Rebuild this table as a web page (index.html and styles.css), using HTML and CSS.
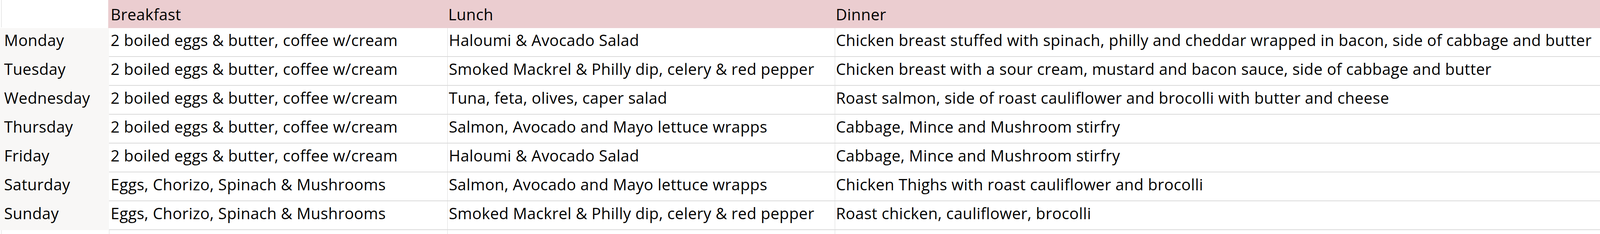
FILE: index.html
```html
<!DOCTYPE html>
<html>
<head>
<meta charset="utf-8">
<link rel="stylesheet" href="styles.css">
</head>
<body>
<div class="sheet">
  <div class="cell corner"></div>
  <div class="cell head first-head">Breakfast</div>
  <div class="cell head">Lunch</div>
  <div class="cell head">Dinner</div>

  <div class="cell day">Monday</div>
  <div class="cell b">2 boiled eggs &amp; butter, coffee w/cream</div>
  <div class="cell l">Haloumi &amp; Avocado Salad</div>
  <div class="cell d">Chicken breast stuffed with spinach, philly and cheddar wrapped in bacon, side of cabbage and butter</div>

  <div class="cell day">Tuesday</div>
  <div class="cell b">2 boiled eggs &amp; butter, coffee w/cream</div>
  <div class="cell l">Smoked Mackrel &amp; Philly dip, celery &amp; red pepper</div>
  <div class="cell d">Chicken breast with a sour cream, mustard and bacon sauce, side of cabbage and butter</div>

  <div class="cell day">Wednesday</div>
  <div class="cell b">2 boiled eggs &amp; butter, coffee w/cream</div>
  <div class="cell l">Tuna, feta, olives, caper salad</div>
  <div class="cell d">Roast salmon, side of roast cauliflower and brocolli with butter and cheese</div>

  <div class="cell day">Thursday</div>
  <div class="cell b">2 boiled eggs &amp; butter, coffee w/cream</div>
  <div class="cell l">Salmon, Avocado and Mayo lettuce wrapps</div>
  <div class="cell d">Cabbage, Mince and Mushroom stirfry</div>

  <div class="cell day">Friday</div>
  <div class="cell b">2 boiled eggs &amp; butter, coffee w/cream</div>
  <div class="cell l">Haloumi &amp; Avocado Salad</div>
  <div class="cell d">Cabbage, Mince and Mushroom stirfry</div>

  <div class="cell day">Saturday</div>
  <div class="cell b">Eggs, Chorizo, Spinach &amp; Mushrooms</div>
  <div class="cell l">Salmon, Avocado and Mayo lettuce wrapps</div>
  <div class="cell d">Chicken Thighs with roast cauliflower and brocolli</div>

  <div class="cell day">Sunday</div>
  <div class="cell b">Eggs, Chorizo, Spinach &amp; Mushrooms</div>
  <div class="cell l">Smoked Mackrel &amp; Philly dip, celery &amp; red pepper</div>
  <div class="cell d">Roast chicken, cauliflower, brocolli</div>

  <div class="cell tail tail-first"></div>
  <div class="cell tail"></div>
  <div class="cell tail"></div>
  <div class="cell tail"></div>
</div>
</body>
</html>
```

FILE: styles.css
```css
html, body {
  margin: 0;
  padding: 0;
  background: #ffffff;
}

.sheet {
  display: grid;
  grid-template-columns: 278.5px 866.7px 992px 1fr;
  grid-template-rows: 72px repeat(7, 74px) 1fr;
  width: 100%;
  height: 100vh;
  overflow: hidden;
  font-family: "Open Sans", "Liberation Sans", sans-serif;
  font-size: 40px;
  line-height: 40px;
  letter-spacing: 0.4px;
  color: #000000;
}

.cell {
  box-sizing: border-box;
  white-space: nowrap;
  padding-left: 4.8px;
  padding-top: 11px;
}

.corner {
  margin-left: 3px;
  border-left: 1.75px solid #d4d4d4;
  margin-bottom: 2px;
}

.head {
  background: #ebcdd0;
  padding-top: 17px;
  padding-left: 2.2px;
}

.first-head {
  margin-left: -1.75px;
  padding-left: 6.5px;
}

.day {
  background: #f8f7f6;
  padding-left: 10.5px;
}

.b, .l, .d {
  border-bottom: 2px solid #dadada;
}

.l, .d {
  border-left: 1.75px solid #dadada;
  padding-left: 2.8px;
}

.d {
  padding-left: 1.8px;
}

.tail {
  padding: 0;
  border-left: 1.75px solid #dadada;
}

.tail-first {
  margin-left: 3px;
}
```
